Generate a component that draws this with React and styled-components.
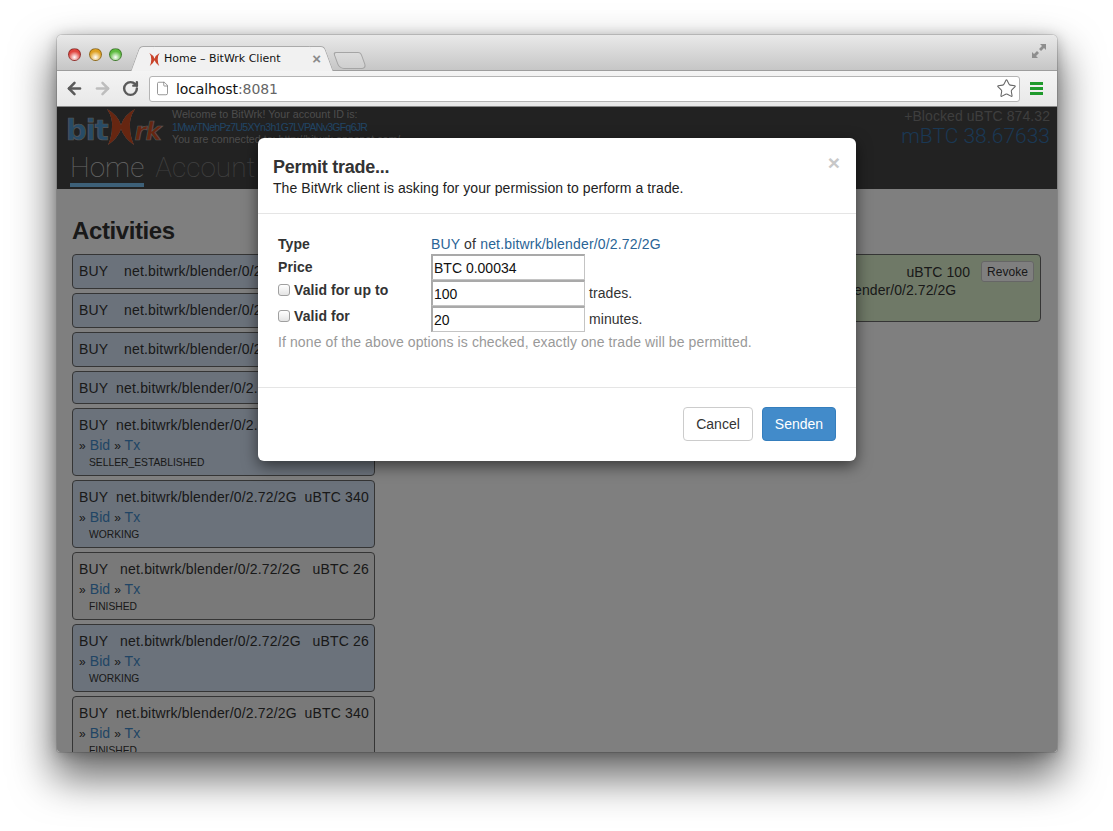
import React from 'react'
import styled, { createGlobalStyle } from 'styled-components'
import { ArrowLeft, ArrowRight, RotateCw, File, Star } from 'lucide-react'

const GlobalStyle = createGlobalStyle`
html, body {
    margin: 0;
    background: #fff;
}
body {
    font-family: "Liberation Sans", Arial, sans-serif;
    font-size: 14px;
    line-height: 20px;
    letter-spacing: .07px;
    color: #333;
}
* {
    box-sizing: border-box;
}
`

const activities = [
    { state: 'info', height: 35, price: 'uBTC 2' },
    { state: 'info', height: 35, price: 'uBTC 2' },
    { state: 'info', height: 35, price: 'uBTC 2' },
    { state: 'info', height: 33, price: 'uBTC 340' },
    { state: 'info', label: 'SELLER_ESTABLISHED', price: 'uBTC 340' },
    { state: 'info', label: 'WORKING', price: 'uBTC 340' },
    { state: 'plain', label: 'FINISHED', price: 'uBTC 26' },
    { state: 'info', label: 'WORKING', price: 'uBTC 26' },
    { state: 'plain', label: 'FINISHED', price: 'uBTC 340' },
]

const Bowtie = ({ size, color }) => (
    <svg width={size} height={size} viewBox="0 0 36 36">
        <path
            d="M4 0 Q15 6 18 16 Q21 6 32 0 Q26 9 27 18 Q27 27 31 36 Q21 29 18 20 Q15 29 5 36 Q9 27 9 18 Q10 9 4 0 Z"
            fill={color}
        />
    </svg>
)

const ExpandIcon = () => (
    <svg width="16" height="16" viewBox="0 0 16 16" fill="#8e8e8e">
        <path d="M9 1 H15 V7 L13 5 L10 8 L8 6 L11 3 Z" />
        <path d="M1 9 V15 H7 L5 13 L8 10 L6 8 L3 11 Z" />
    </svg>
)

const ActivityItem = ({ item }) => (
    <Item $state={item.state} style={item.height ? { height: item.height } : undefined}>
        <ItemRow>
            <span>BUY</span>
            <span>net.bitwrk/blender/0/2.72/2G</span>
            <span>{item.price}</span>
        </ItemRow>
        {item.label && (
            <>
                <Links>
                    <small>»</small> <a>Bid</a> <small>»</small> <a>Tx</a>
                </Links>
                <StateLabel>{item.label}</StateLabel>
            </>
        )}
    </Item>
)

const App = () => {
    return (
        <Stage>
            <GlobalStyle />
            <Window>
                <TabBar>
                    <Lights>
                        <Light $color="#e0443e" />
                        <Light $color="#dea123" />
                        <Light $color="#5dbb3f" />
                    </Lights>
                    <Tab>
                        <Bowtie size={13} color="#c9432a" />
                        <TabTitle>Home – BitWrk Client</TabTitle>
                        <TabClose>×</TabClose>
                    </Tab>
                    <NewTab />
                    <Expand>
                        <ExpandIcon />
                    </Expand>
                </TabBar>

                <Toolbar>
                    <NavIcon><ArrowLeft size={19} strokeWidth={3.2} color="#5a5a5a" /></NavIcon>
                    <NavIcon><ArrowRight size={19} strokeWidth={3.2} color="#bdbdbd" /></NavIcon>
                    <NavIcon><RotateCw size={17} strokeWidth={3.4} color="#5a5a5a" /></NavIcon>
                    <Omnibox>
                        <File size={15} strokeWidth={1.2} color="#777" />
                        <Url>localhost<span>:8081</span></Url>
                        <Star size={21} strokeWidth={1.2} color="#666" />
                    </Omnibox>
                    <Burger>
                        <i /><i /><i />
                    </Burger>
                </Toolbar>

                <Page>
                    <Header>
                        <Brand>
                            <Logo>
                                <LogoBit>bit</LogoBit>
                                <LogoMark><Bowtie size={36} color="#cc4c22" /></LogoMark>
                                <LogoRk>rk</LogoRk>
                            </Logo>
                            <Welcome>
                                <div>Welcome to BitWrk! Your account ID is:</div>
                                <AccountId>1MwvTNehPz7U5XYn3h1G7LVPANv3GFq6JR</AccountId>
                                <div>You are connected to: http://bitwrk.appspot.com/</div>
                            </Welcome>
                        </Brand>
                        <Nav>
                            <NavLink $active>Home</NavLink>
                            <NavLink>Account</NavLink>
                        </Nav>
                        <Balance>
                            <Blocked>+Blocked uBTC 874.32</Blocked>
                            <Amount>mBTC 38.67633</Amount>
                        </Balance>
                    </Header>

                    <Content>
                        <Column>
                            <Heading>Activities</Heading>
                            <ItemList>
                                {activities.map((item, i) => (
                                    <ActivityItem key={i} item={item} />
                                ))}
                            </ItemList>
                        </Column>
                        <Column>
                            <Heading>Permissions</Heading>
                            <Permission>
                                <PermissionTop>
                                    <span>uBTC 100</span>
                                    <Revoke>Revoke</Revoke>
                                </PermissionTop>
                                <PermissionArticle>BUY of net.bitwrk/blender/0/2.72/2G</PermissionArticle>
                            </Permission>
                        </Column>
                    </Content>

                    <Backdrop />

                    <Modal>
                        <ModalHeader>
                            <Close>×</Close>
                            <ModalTitle>Permit trade...</ModalTitle>
                            <p>The BitWrk client is asking for your permission to perform a trade.</p>
                        </ModalHeader>
                        <ModalBody>
                            <FormGrid>
                                <Label>Type</Label>
                                <TypeValue>BUY <span>of</span> net.bitwrk/blender/0/2.72/2G</TypeValue>

                                <Label $center>Price</Label>
                                <Field><Input readOnly value="BTC 0.00034" /></Field>

                                <Label><Check type="checkbox" />Valid for up to</Label>
                                <Field><Input readOnly value="100" /> trades.</Field>

                                <Label><Check type="checkbox" />Valid for</Label>
                                <Field><Input readOnly value="20" /> minutes.</Field>
                            </FormGrid>
                            <Help>If none of the above options is checked, exactly one trade will be permitted.</Help>
                        </ModalBody>
                        <ModalFooter>
                            <Button>Cancel</Button>
                            <Button $primary>Senden</Button>
                        </ModalFooter>
                    </Modal>
                </Page>
            </Window>
        </Stage>
    )
}

export default App

const Stage = styled.div`
width: 1113px;
height: 831px;
padding: 35px 56px 0 57px;
overflow: hidden;
`

const Window = styled.div`
width: 1000px;
height: 717px;
display: flex;
flex-direction: column;
border-radius: 5px 5px 3px 3px;
box-shadow: 0 0 0 1px rgba(0,0,0,.12), 0 22px 42px 4px rgba(0,0,0,.58), 0 2px 14px rgba(0,0,0,.25);
`

const TabBar = styled.div`
height: 36px;
flex: none;
display: flex;
align-items: flex-end;
position: relative;
padding-left: 11px;
background: linear-gradient(#e9e9e9, #c6c6c6);
border-radius: 5px 5px 0 0;
border-bottom: 1px solid #9d9d9d;
`

const Lights = styled.div`
display: flex;
gap: 7.5px;
align-self: flex-start;
margin-top: 13px;
`

const Light = styled.span`
width: 13px;
height: 13px;
border-radius: 50%;
border: 1px solid rgba(0,0,0,.35);
background: radial-gradient(circle at 50% 75%, #fff 0%, ${props => props.$color} 60%, ${props => props.$color} 100%);
`

const Tab = styled.div`
width: 180px;
height: 25px;
margin: 0 0 -1px 20px;
padding: 0 0 0 6px;
display: flex;
align-items: center;
position: relative;
z-index: 1;
background: #f1f1f1;
border-top: 1px solid #aaa;
border-radius: 4px 4px 0 0;

&::before, &::after {
    content: '';
    position: absolute;
    top: -1px;
    bottom: 0;
    width: 14px;
    background: #f1f1f1;
    border-top: 1px solid #aaa;
    z-index: -1;
}
&::before {
    left: -7px;
    transform: skewX(-20deg);
    border-left: 1px solid #aaa;
    border-radius: 4px 0 0 0;
}
&::after {
    right: -7px;
    transform: skewX(20deg);
    border-right: 1px solid #aaa;
    border-radius: 0 4px 0 0;
}
`

const TabTitle = styled.span`
margin-left: 3px;
font-family: "DejaVu Sans", sans-serif;
font-size: 11px;
letter-spacing: 0;
color: #111;
white-space: nowrap;
`

const TabClose = styled.span`
margin-left: auto;
margin-right: 1px;
font-size: 15px;
font-weight: bold;
color: #8a8a8a;
`

const NewTab = styled.div`
width: 28px;
height: 17px;
margin: 0 0 1px 14px;
border: 1px solid #a5a5a5;
border-radius: 3px 3px 5px 5px;
background: linear-gradient(#dcdcdc, #cfcfcf);
transform: skewX(20deg);
`

const Expand = styled.div`
position: absolute;
top: 8px;
right: 10px;
line-height: 0;
`

const Toolbar = styled.div`
height: 36px;
flex: none;
display: flex;
align-items: center;
padding: 0 14px 0 3px;
background: linear-gradient(#f4f4f4, #e8e8e8);
border-bottom: 1px solid #888;
`

const NavIcon = styled.div`
width: 28px;
height: 24px;
display: flex;
align-items: center;
justify-content: center;
flex: none;
`

const Omnibox = styled.div`
flex: 1;
height: 26px;
margin: 0 10px 0 5px;
padding: 0 2px 0 5px;
display: flex;
align-items: center;
background: #fff;
border: 1px solid #b4b4b4;
border-radius: 3px;
`

const Url = styled.div`
flex: 1;
margin-left: 6px;
font-family: "DejaVu Sans", sans-serif;
font-size: 14px;
letter-spacing: -.1px;
color: #111;

span {
    color: #666;
}
`

const Burger = styled.div`
display: flex;
flex-direction: column;
gap: 2px;
flex: none;

i {
    display: block;
    width: 13px;
    height: 3px;
    background: #1f9a2c;
}
`

const Page = styled.div`
flex: 1;
min-height: 0;
position: relative;
overflow: hidden;
background: #fff;
border-radius: 0 0 3px 3px;
`

const Header = styled.header`
height: 82px;
position: relative;
padding: 0 7px 0 9px;
background: #444;
`

const Brand = styled.div`
display: flex;
gap: 8px;
`

const Logo = styled.div`
width: 98px;
height: 40px;
display: flex;
align-items: flex-end;
flex: none;
padding-bottom: 2px;
font-family: "DejaVu Sans", sans-serif;
font-weight: bold;
-webkit-text-stroke: .7px #aaa;
`

const LogoBit = styled.span`
font-size: 29px;
line-height: 30px;
letter-spacing: -1px;
color: #4f96cc;
`

const LogoMark = styled.span`
margin: 0 0 0 -5px;
line-height: 0;
filter: drop-shadow(0 0 .6px #ccc);
`

const LogoRk = styled.span`
margin-left: -4px;
font-size: 24px;
line-height: 26px;
font-style: italic;
letter-spacing: -1px;
color: #cc4c22;
`

const Welcome = styled.div`
padding-top: 1px;
font-size: 10.7px;
line-height: 12.5px;
letter-spacing: 0;
color: #999;
white-space: nowrap;
`

const AccountId = styled.a`
display: block;
font-size: 10.5px;
letter-spacing: -.7px;
color: #428bca;
`

const Nav = styled.nav`
position: absolute;
left: 13px;
top: 44px;
display: flex;
gap: 11px;
`

const NavLink = styled.a`
height: 36px;
font-family: Roboto, sans-serif;
font-weight: 100;
font-size: 28px;
line-height: 34px;
letter-spacing: 0;
color: ${props => props.$active ? '#ccc' : '#808080'};
border-bottom: ${props => props.$active ? '4px solid #7ac0f0' : 'none'};
`

const Balance = styled.div`
position: absolute;
top: 1px;
right: 7px;
text-align: right;
`

const Blocked = styled.div`
font-size: 14px;
line-height: 16px;
color: #7c7c7c;
`

const Amount = styled.div`
font-family: Roboto, sans-serif;
font-weight: 300;
font-size: 21px;
line-height: 22px;
margin-top: 1px;
letter-spacing: 0;
color: #3570a8;
`

const Content = styled.main`
display: grid;
grid-template-columns: 303px 1fr;
gap: 24px;
padding: 22px 16px 0 15px;
`

const Column = styled.section`
min-width: 0;
`

const Heading = styled.h2`
margin: 0 0 3px;
font-size: 24px;
line-height: 40px;
font-weight: bold;
letter-spacing: -.4px;
color: #333;
`

const ItemList = styled.div`
display: flex;
flex-direction: column;
gap: 4px;
`

const Item = styled.div`
height: 68px;
flex: none;
padding: 6px 5px 0 6px;
border: 1px solid #6a6a6a;
border-radius: 4px;
background: ${props => props.$state === 'info' ? '#d6e4f6' : '#f2f2f2'};
`

const ItemRow = styled.div`
display: flex;
justify-content: space-between;
white-space: nowrap;
line-height: 20px;
letter-spacing: .17px;
`

const Links = styled.div`
line-height: 20px;

small {
    font-size: 12px;
}
a {
    color: #428bca;
}
`

const StateLabel = styled.div`
margin: 0 0 0 10px;
font-size: 10.3px;
line-height: 14px;
letter-spacing: 0;
text-transform: uppercase;
`

const Permission = styled.div`
height: 68px;
padding: 6px 6px 0 8px;
border: 1px solid #6a6a6a;
border-radius: 4px;
background: #dff3cf;
`

const PermissionTop = styled.div`
display: flex;
justify-content: flex-end;
align-items: center;
gap: 11px;
height: 21px;
`

const PermissionArticle = styled.div`
padding-left: 322px;
line-height: 16px;
white-space: nowrap;
`

const Revoke = styled.span`
width: 53px;
height: 21px;
display: flex;
align-items: center;
justify-content: center;
font-size: 12px;
border: 1px solid #ccc;
border-radius: 3px;
background: #fff;
`

const Backdrop = styled.div`
position: absolute;
inset: 0;
background: rgba(0,0,0,.5);
`

const Modal = styled.div`
position: absolute;
left: 201px;
top: 31px;
width: 598px;
height: 323px;
background: #fff;
border-radius: 6px;
box-shadow: 0 5px 15px rgba(0,0,0,.55);
`

const ModalHeader = styled.div`
height: 76px;
position: relative;
padding: 19px 15px 0;
border-bottom: 1px solid #e5e5e5;

p {
    margin: 1px 0 0;
    color: #222;
}
`

const ModalTitle = styled.h4`
margin: 0;
font-size: 18px;
line-height: 20px;
font-weight: bold;
letter-spacing: -.25px;
`

const Close = styled.span`
position: absolute;
top: 14px;
right: 16px;
font-size: 21px;
line-height: 21px;
font-weight: bold;
color: #c8c8c8;
`

const ModalBody = styled.div`
height: 174px;
padding: 20px 20px 0;
border-bottom: 1px solid #e5e5e5;
`

const FormGrid = styled.div`
display: grid;
grid-template-columns: 153px 1fr;
grid-auto-rows: 26px;
grid-template-rows: 20px;
`

const Label = styled.label`
display: flex;
align-items: ${props => props.$center ? 'center' : 'flex-start'};
font-weight: bold;
color: #333;
`

const TypeValue = styled.div`
letter-spacing: .17px;
color: #2a6496;

span {
    color: #333;
}
`

const Field = styled.div`
display: flex;
align-items: center;
gap: 4px;
color: #333;
`

const Input = styled.input`
width: 154px;
height: 26px;
padding: 1px 1px;
font-family: "Liberation Sans", Arial, sans-serif;
font-size: 14px;
color: #111;
background: #fff;
border-style: solid;
border-width: 2px 1px 1px 2px;
border-color: #a9a9a9 #c4c4c4 #c4c4c4 #a9a9a9;
outline: none;
`

const Check = styled.input`
appearance: none;
width: 12px;
height: 12px;
margin: 4px 4px 0 0;
flex: none;
border: 1px solid #a0a0a0;
border-radius: 3px;
background: linear-gradient(#fff, #e4e4e4);
`

const Help = styled.div`
letter-spacing: .1px;
color: #999;
`

const ModalFooter = styled.div`
display: flex;
justify-content: flex-end;
gap: 9px;
padding: 19px 20px 0;
`

const Button = styled.button`
height: 34px;
width: ${props => props.$primary ? '74px' : '70px'};
padding: 0;
font-family: "Liberation Sans", Arial, sans-serif;
font-size: 14px;
color: ${props => props.$primary ? '#fff' : '#333'};
background: ${props => props.$primary ? '#428bca' : '#fff'};
border: 1px solid ${props => props.$primary ? '#357ebd' : '#ccc'};
border-radius: 4px;
`
